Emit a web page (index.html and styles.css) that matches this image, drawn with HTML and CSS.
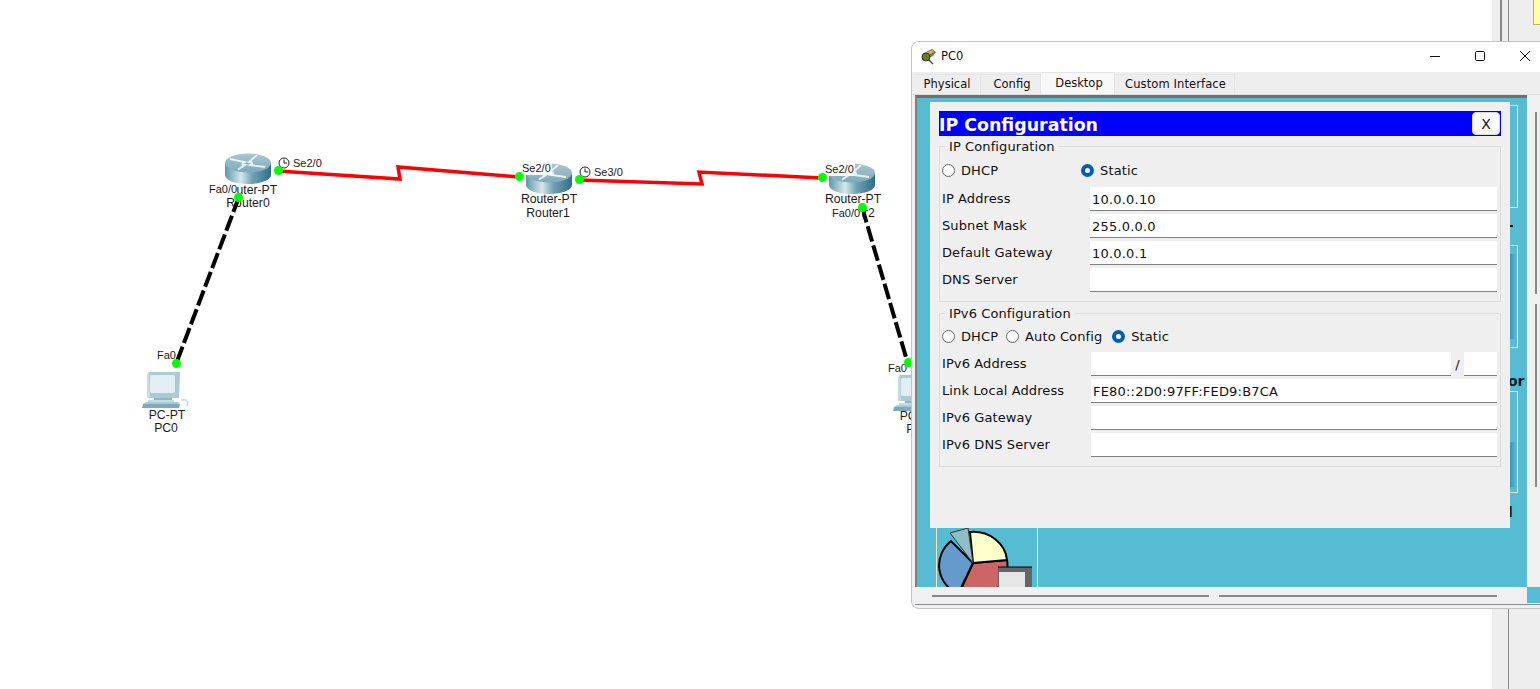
FILE: index.html
```html
<!DOCTYPE html>
<html lang="en">

<head>
    <meta charset="UTF-8">
    <meta name="viewport" content="width=device-width, initial-scale=1.0">
    <link rel="stylesheet" href="styles.css">

    <title>PC0 - IP Configuration</title>
</head>

<body>
    <div class="sidebar">
        <div class="sidebar-note"></div>
    </div>

    <!-- topology -->
    <div class="canvas">
        <svg class="links" width="1540" height="689" viewBox="0 0 1540 689">
            <polyline class="serial" points="278,171 400,179 398,167 519,177"/>
            <polyline class="serial" points="579,180 702,184 699,172 822,178"/>
            <line class="copper" x1="239" y1="197" x2="176" y2="364"/>
            <line class="copper" x1="862" y1="207" x2="908" y2="364"/>
        </svg>

        <svg class="device router-a" width="48" height="32" viewBox="0 0 48 32"><use href="#router"/></svg>
        <svg class="device router-b" width="48" height="32" viewBox="0 0 48 32"><use href="#router"/></svg>
        <svg class="device router-c" width="48" height="32" viewBox="0 0 48 32"><use href="#router"/></svg>
        <svg class="device pc-a" width="48" height="42" viewBox="0 0 48 42"><use href="#pc"/></svg>
        <svg class="device pc-b" width="48" height="42" viewBox="0 0 48 42"><use href="#pc"/></svg>

        <span class="label center dev-a1">Router-PT</span>
        <span class="label center dev-a2">Router0</span>
        <span class="label center dev-b1">Router-PT</span>
        <span class="label center dev-b2">Router1</span>
        <span class="label center dev-c1">Router-PT</span>
        <span class="label center dev-c2">Router2</span>
        <span class="label center dev-d1">PC-PT</span>
        <span class="label center dev-d2">PC0</span>
        <span class="label center dev-e1">PC-PT</span>
        <span class="label center dev-e2">PC1</span>

        <span class="label port port-a">Fa0/0</span>
        <span class="label port port-b">Se2/0</span>
        <span class="label port port-c boxed">Se2/0</span>
        <span class="label port port-d">Se3/0</span>
        <span class="label port port-e boxed">Se2/0</span>
        <span class="label port port-f">Fa0/0</span>
        <span class="label port port-g">Fa0</span>
        <span class="label port port-h boxed">Fa0</span>

        <svg class="clock clock-a" width="12" height="12" viewBox="0 0 12 12"><circle cx="6" cy="6" r="5"/><path d="M6 2.500v3.500h3"/></svg>
        <svg class="clock clock-b" width="12" height="12" viewBox="0 0 12 12"><circle cx="6" cy="6" r="5"/><path d="M6 2.500v3.500h3"/></svg>

        <i class="dot dot-1"></i>
        <i class="dot dot-2"></i>
        <i class="dot dot-3"></i>
        <i class="dot dot-4"></i>
        <i class="dot dot-5"></i>
        <i class="dot dot-6"></i>
        <i class="dot dot-7"></i>
        <i class="dot dot-8"></i>
    </div>

    <!-- pc window -->
    <div class="window">
        <div class="titlebar">
            <svg class="app-icon" width="17" height="17" viewBox="0 0 17 17">
                <path d="M2 6 12 1l4 3-3 4-6 3z" fill="#8a7440"/>
                <path d="M3 6 12 2l2 2-8 4z" fill="#c9b26e"/>
                <circle cx="6" cy="9" r="4" fill="#6b7d1e" stroke="#333"/>
                <path d="M9 12l4 4" stroke="#444" stroke-width="1.5"/>
            </svg>
            <span class="title-text">PC0</span>
            <div class="win-buttons">
                <svg width="12" height="12" viewBox="0 0 12 12"><path d="M1 6.500h10"/></svg>
                <svg width="12" height="12" viewBox="0 0 12 12"><rect x="1.500" y="1.500" width="9" height="9" rx="1"/></svg>
                <svg width="12" height="12" viewBox="0 0 12 12"><path d="M1 1l10 10M11 1 1 11"/></svg>
            </div>
        </div>

        <div class="tabs">
            <div class="tab tab-physical">Physical</div>
            <div class="tab tab-config">Config</div>
            <div class="tab tab-desktop active">Desktop</div>
            <div class="tab tab-custom">Custom Interface</div>
        </div>

        <div class="content">
            <div class="desktop">
                <div class="behind">
                    <div class="app-box box-top"></div>
                    <i class="glyph-bit"></i>
                    <div class="app-box box-mid"><i class="box-shade shade-mid"></i></div>
                    <span class="frag frag-or">or</span>
                    <div class="app-box box-low"><i class="box-shade shade-low"></i></div>
                    <span class="frag frag-l">l</span>
                    <div class="app-box box-pie">
                        <svg width="96" height="59" viewBox="0 0 96 59">
                            <path d="M35 35 69 32A34 32 0 0 1 45 68H20z" fill="#cc6666" stroke="#000" stroke-width="2"/>
                            <path d="M35 35 32 4A34 31 0 0 1 69 32z" fill="#ffffcc" stroke="#000" stroke-width="2"/>
                            <path d="M35 35 13 13A34 32 0 0 0 20 66z" fill="#6699cc" stroke="#000" stroke-width="2"/>
                            <path d="M12 5 30 0l5 35z" fill="#8fbfc4" stroke="#333"/>
                            <path d="M60 39h34v20H60z" fill="#666"/>
                            <path d="M60 39h34" stroke="#000"/>
                            <path d="M61 44h26v15H61z" fill="#e6e6e6"/>
                        </svg>
                    </div>
                </div>

                <div class="dialog">
                    <div class="dialog-head">
                        <span class="dialog-title">IP Configuration</span>
                        <button class="close-btn" type="button">X</button>
                    </div>

                    <fieldset class="group group-v4">
                        <legend>IP Configuration</legend>
                        <div class="radios radios-v4">
                            <span class="radio"><i class="circle"></i>DHCP</span>
                            <span class="radio"><i class="circle on"></i>Static</span>
                        </div>
                        <div class="row"><span class="row-label">IP Address</span><div class="field">10.0.0.10</div></div>
                        <div class="row"><span class="row-label">Subnet Mask</span><div class="field">255.0.0.0</div></div>
                        <div class="row"><span class="row-label">Default Gateway</span><div class="field">10.0.0.1</div></div>
                        <div class="row"><span class="row-label">DNS Server</span><div class="field"></div></div>
                    </fieldset>

                    <fieldset class="group group-v6">
                        <legend>IPv6 Configuration</legend>
                        <div class="radios">
                            <span class="radio"><i class="circle"></i>DHCP</span>
                            <span class="radio radio-auto"><i class="circle"></i>Auto Config</span>
                            <span class="radio"><i class="circle on"></i>Static</span>
                        </div>
                        <div class="row">
                            <span class="row-label">IPv6 Address</span>
                            <div class="field"></div>
                            <span class="slash">/</span>
                            <div class="field prefix"></div>
                        </div>
                        <div class="row"><span class="row-label">Link Local Address</span><div class="field">FE80::2D0:97FF:FED9:B7CA</div></div>
                        <div class="row"><span class="row-label">IPv6 Gateway</span><div class="field"></div></div>
                        <div class="row"><span class="row-label">IPv6 DNS Server</span><div class="field"></div></div>
                    </fieldset>
                </div>
            </div>
            <div class="vscroll"><i class="thumb-a"></i><i class="thumb-b"></i></div>
        </div>

        <div class="bottom">
            <div class="hscroll">
                <i class="bar-a"></i>
                <i class="bar-b"></i>
            </div>
            <div class="corner"></div>
        </div>
    </div>

    <!-- shared device artwork -->
    <svg width="0" height="0" class="defs">
        <defs>
            <linearGradient id="rside" x1="0" x2="1" y1="0" y2="0">
                <stop offset="0" stop-color="#5f97ab"/>
                <stop offset=".35" stop-color="#d5e7ed"/>
                <stop offset=".6" stop-color="#6fa0b2"/>
                <stop offset="1" stop-color="#2f6f86"/>
            </linearGradient>
            <linearGradient id="rtop" x1="0" x2="0" y1="0" y2="1">
                <stop offset="0" stop-color="#a9c6d1"/>
                <stop offset="1" stop-color="#7ea9b9"/>
            </linearGradient>
            <g id="router">
                <path d="M1 10v12c0 5 10 9 23 9s23-4 23-9V10z" fill="url(#rside)"/>
                <ellipse cx="24" cy="10" rx="23" ry="9.500" fill="url(#rtop)"/>
                <path d="M6 6l15 3-3 1.500M33 2l-8 7 3.500.5M41 14l-15-2 3-1.500M14 16.500l7-4.500-3.500-.5" fill="none" stroke="#e8f2f5" stroke-width="1.800"/>
            </g>
            <g id="pc">
                <path d="M7 1h31l-1 26H5V4z" fill="#a9cbd6"/>
                <path d="M7 1 5 4v23h3z" fill="#c5dce3"/>
                <rect x="8" y="4" width="25" height="18" rx="2" fill="#e3eef2"/>
                <path d="M12 27h18v4H12z" fill="#8fb5c2"/>
                <path d="M6 29h26v2H6z" fill="#c5dce3"/>
                <path d="M4 31h32l2 2H1z" fill="#a9cbd6"/>
                <path d="M1 33h37l-1 4H0z" fill="#7ea9b9"/>
                <path d="M39 29c6-1 8 1 6 6" fill="none" stroke="#c5dce3" stroke-width="1.500"/>
            </g>
        </defs>
    </svg>
</body>

</html>
```

FILE: styles.css
```css
* {
    box-sizing: border-box;
}

html,
body {
    margin: 0;
    height: 689px;
    overflow: hidden;
    background-color: #fff;
}

body {
    position: relative;
    font-family: "DejaVu Sans", sans-serif;
    color: #111;
}

.defs {
    position: absolute;
}

/* strip of the main program window behind the pc window */
.sidebar {
    position: absolute;
    left: 1492px;
    top: 0;
    width: 48px;
    height: 689px;
    background-color: #eee;
}

.sidebar::before {
    content: "";
    position: absolute;
    left: 8px;
    top: 0;
    width: 9px;
    height: 42px;
    border-left: 2px solid #888;
}

.sidebar::after {
    content: "";
    position: absolute;
    left: 16px;
    top: 0;
    width: 1px;
    height: 689px;
    background-color: #888;
}

.sidebar-note {
    position: absolute;
    left: 41px;
    top: 0;
    width: 7px;
    height: 25px;
    background-color: #ffffa8;
    border-left: 1px solid #b8b860;
    border-bottom: 1px solid #b8b860;
}

/* topology */
.canvas {
    position: absolute;
    left: 0;
    top: 0;
    width: 1540px;
    height: 689px;
}

.links {
    position: absolute;
    left: 0;
    top: 0;
}

.serial {
    fill: none;
    stroke: #f00;
    stroke-width: 3.5;
}

.copper {
    stroke: #000;
    stroke-width: 4;
    stroke-dasharray: 16 4;
}

.device {
    position: absolute;
}

.router-a { left: 224px; top: 153px; }
.router-b { left: 525px; top: 163px; }
.router-c { left: 828px; top: 163px; }
.pc-a { left: 142px; top: 371px; }
.pc-b { left: 893px; top: 374px; }

.label {
    position: absolute;
    font-family: "Liberation Sans", sans-serif;
    font-size: 12.2px;
    line-height: 13px;
    white-space: nowrap;
    color: #1a1a1a;
}

.label.port {
    font-size: 11px;
}

.center {
    transform: translateX(-50%);
}

.boxed {
    background-color: #fff;
    padding: 0 1px;
}

.dev-a1 { left: 249px; top: 184px; }
.dev-a2 { left: 248px; top: 197px; }
.dev-b1 { left: 549px; top: 193px; }
.dev-b2 { left: 548px; top: 207px; }
.dev-c1 { left: 853px; top: 193px; }
.dev-c2 { left: 853px; top: 207px; }
.dev-d1 { left: 167px; top: 409px; }
.dev-d2 { left: 166px; top: 422px; }
.dev-e1 { left: 918px; top: 410px; }
.dev-e2 { left: 918px; top: 423px; }

.port-a { left: 209px; top: 183px; background-color: #fff; }
.port-b { left: 293px; top: 157px; }
.port-c { left: 521px; top: 162px; }
.port-d { left: 594px; top: 166px; }
.port-e { left: 824px; top: 163px; }
.port-f { left: 832px; top: 207px; background-color: #fff; padding-right: 2px; }
.port-g { left: 157px; top: 349px; }
.port-h { left: 887px; top: 362px; }

.clock {
    position: absolute;
    fill: #fff;
    stroke: #222;
    stroke-width: 1;
}

.clock-a { left: 278px; top: 157px; }
.clock-b { left: 579px; top: 166px; }

.dot {
    position: absolute;
    width: 9px;
    height: 9px;
    border-radius: 50%;
    background-color: #0f0;
}

.dot-1 { left: 274px; top: 166px; }
.dot-2 { left: 234px; top: 193px; }
.dot-3 { left: 515px; top: 172px; }
.dot-4 { left: 575px; top: 175px; }
.dot-5 { left: 818px; top: 173px; }
.dot-6 { left: 858px; top: 203px; }
.dot-7 { left: 172px; top: 359px; }
.dot-8 { left: 904px; top: 358px; }

/* pc window */
.window {
    position: absolute;
    left: 911px;
    top: 41px;
    width: 640px;
    height: 568px;
    display: flex;
    flex-direction: column;
    padding-bottom: 3px;
    background-color: #f0f0f0;
    border: 1px solid #c4c4c4;
    border-right: 0;
    border-radius: 8px 0 0 8px;
    overflow: hidden;
}

.titlebar {
    display: flex;
    align-items: center;
    height: 30px;
    flex: none;
    padding: 0 0 2px 8px;
    background-color: #fff;
}

.app-icon {
    margin-right: 4px;
}

.title-text {
    font-size: 11.5px;
}

.win-buttons {
    display: flex;
    gap: 33px;
    margin-left: auto;
    margin-right: 20px;
}

.win-buttons svg {
    fill: none;
    stroke: #111;
    stroke-width: 1;
}

.tabs {
    display: flex;
    align-items: flex-end;
    flex: none;
    height: 23px;
    padding-left: 2px;
    background-color: #eee;
    border-bottom: 1px solid #ddd;
}

.tab {
    height: 20px;
    font-size: 11.5px;
    line-height: 19px;
    text-align: center;
    border: 1px solid #e4e4e4;
    border-bottom: 0;
    border-left: 0;
    background-color: #eee;
}

.tab-physical { width: 67px; }
.tab-config { width: 60px; padding-left: 3px; }
.tab-desktop { width: 74px; padding-left: 3px; }
.tab-custom { width: 120px; padding-left: 2px; letter-spacing: 0.1px; }

.tab.active {
    height: 22px;
    background-color: #f8f8f8;
    line-height: 21px;
}

.content {
    display: flex;
    flex: 1;
    min-height: 0;
    padding-left: 3px;
}

.desktop {
    position: relative;
    width: 612px;
    background-color: #55bcd4;
    border-top: 3px solid #707070;
    border-left: 2px solid #808080;
}

.vscroll {
    width: 13px;
    padding: 14px 0 0 8px;
    border-top: 3px solid #f0f0f0;
}

.vscroll i {
    display: block;
    width: 2px;
    background-color: #888;
}

.thumb-a {
    height: 182px;
    margin-bottom: 10px;
}

.thumb-b {
    height: 183px;
}

.behind {
    position: absolute;
    inset: 0;
    overflow: hidden;
}

.app-box {
    position: absolute;
    border: 1px solid #eee6c8;
}

.box-top {
    left: 589px;
    top: 7px;
    width: 12px;
    height: 103px;
}

.box-mid {
    left: 589px;
    top: 147px;
    width: 12px;
    height: 103px;
}

.box-low {
    left: 589px;
    top: 293px;
    width: 12px;
    height: 102px;
}

.box-shade {
    position: absolute;
    right: 1px;
    width: 7px;
    background: linear-gradient(90deg, #2f8fb8, #55bcd4);
}

.shade-mid {
    top: 8px;
    height: 85px;
}

.shade-low {
    top: 50px;
    height: 45px;
}

.glyph-bit {
    position: absolute;
    left: 593px;
    top: 127px;
    width: 3px;
    height: 2px;
    background-color: #111;
}

.box-pie {
    left: 19px;
    top: 430px;
    width: 102px;
    height: 60px;
    border-top: 0;
    border-bottom: 0;
}

.box-pie svg {
    display: block;
    margin-left: 1px;
}

.frag {
    position: absolute;
    font-family: "DejaVu Sans", sans-serif;
    font-weight: bold;
    font-size: 14px;
    line-height: 16px;
    color: #0b1b2b;
}

.frag-or {
    left: 591px;
    top: 275px;
}

.frag-l {
    left: 591px;
    top: 406px;
}

/* ip dialog */
.dialog {
    position: absolute;
    left: 13px;
    top: 4px;
    width: 580px;
    height: 426px;
    padding: 9px 9px 0;
    background-color: #efefef;
}

.dialog-head {
    display: flex;
    align-items: center;
    justify-content: space-between;
    height: 25px;
    background-color: #00f;
    color: #fff;
    font-size: 17.4px;
    font-weight: bold;
}

.dialog-title {
    padding-top: 2px;
}

.close-btn {
    width: 28px;
    height: 23px;
    padding: 0;
    font-family: "DejaVu Sans", sans-serif;
    font-size: 14px;
    color: #111;
    background-color: #fafafa;
    border: 1px solid #d8d8d8;
    border-radius: 4px;
    margin-right: 1px;
}

.group {
    margin: 0;
    padding: 0 3px 0 2px;
    border: 1px solid #dcdcdc;
    min-width: 0;
}

.group legend {
    margin-left: 3px;
    padding: 0 4px;
    font-size: 13px;
    line-height: 15px;
    letter-spacing: 0.1px;
}

.group-v4 {
    margin-top: 3px;
    height: 163px;
}

.group-v6 {
    margin-top: 4px;
    height: 161px;
}

.radios {
    display: flex;
    align-items: center;
    gap: 10px;
    height: 24px;
    margin-bottom: 3px;
    margin-top: 3px;
}

.radios-v4 {
    gap: 83px;
    margin-top: 4px;
    margin-bottom: 4px;
}

.radio {
    display: flex;
    align-items: center;
    gap: 6px;
    font-size: 13px;
    letter-spacing: 0.1px;
}

.radio-auto {
    margin-left: -2px;
}

.circle {
    width: 13px;
    height: 13px;
    border: 1px solid #666;
    border-radius: 50%;
    background-color: #fff;
}

.circle.on {
    border: 4px solid #0060b8;
    background-color: #fff;
}

.row {
    display: flex;
    align-items: center;
    height: 27px;
    font-size: 13px;
    letter-spacing: 0.1px;
}

.row-label {
    width: 148px;
    flex: none;
    padding-bottom: 2px;
    white-space: nowrap;
}

.group-v6 .row-label {
    width: 149px;
}

.field {
    flex: 1;
    height: 24px;
    margin-bottom: 2px;
    padding-left: 2px;
    font-size: 13px;
    line-height: 26px;
    letter-spacing: 0.2px;
    background-color: #fff;
    border-bottom: 1px solid #808080;
}

.slash {
    width: 13px;
    flex: none;
    text-align: center;
}

.field.prefix {
    flex: none;
    width: 33px;
}

/* bottom scroll area */
.bottom {
    display: flex;
    flex: none;
    height: 18px;
    margin-left: 3px;
    border-bottom: 1px solid #8a8a96;
}

.hscroll {
    display: flex;
    gap: 10px;
    width: 612px;
    padding: 8px 0 0 17px;
}

.hscroll i {
    display: block;
    height: 2px;
    background-color: #888;
}

.bar-a {
    width: 277px;
}

.bar-b {
    width: 278px;
}

.corner {
    width: 13px;
    height: 16px;
    background-color: #55bcd4;
}
```
